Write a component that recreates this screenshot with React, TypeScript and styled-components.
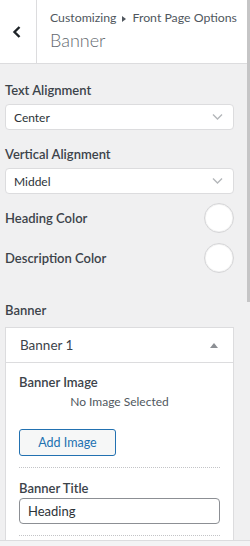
import styled, { createGlobalStyle } from "styled-components";

const GlobalStyle = createGlobalStyle`
  html, body {
    margin: 0;
    padding: 0;
    background: #f0f0f1;
  }
  body {
    font-family: Lato, "Liberation Sans", sans-serif;
    color: #1d2327;
  }
  * {
    box-sizing: border-box;
  }
`;

const Panel = styled.div`
  width: 250px;
  height: 546px;
  display: flex;
  flex-direction: column;
  background: #f0f0f1;
`;

const Main = styled.div`
  flex: 1;
  display: flex;
  min-height: 0;
`;

const Content = styled.div`
  flex: 1;
  min-width: 0;
  overflow: hidden;
`;

const ScrollTrack = styled.div`
  width: 3px;
  flex: none;
  background: #f0f0f1;
`;

const ScrollThumb = styled.div`
  height: 302px;
  background: #c5c5c6;
`;

const Header = styled.div`
  display: flex;
  height: 64px;
  background: #fff;
  border-bottom: 1px solid #dcdcde;
`;

const BackButton = styled.button`
  width: 37px;
  flex: none;
  display: flex;
  align-items: center;
  justify-content: center;
  padding: 0 2px 0 0;
  background: #fff;
  border: 0;
  border-right: 1px solid #dcdcde;
  cursor: pointer;
`;

const HeaderText = styled.div`
  display: flex;
  flex-direction: column;
  padding: 9px 0 0 13px;
`;

const Breadcrumb = styled.div`
  display: flex;
  align-items: center;
  font-size: 12.3px;
  line-height: 18px;
  color: #50575e;
  white-space: nowrap;
`;

const Arrow = styled.svg`
  margin: 1px 6px 0 6px;
`;

const Title = styled.div`
  font-size: 18px;
  font-weight: 300;
  line-height: 27px;
  color: #646970;
`;

const Body = styled.div`
  padding: 16px 13px 0 5px;
  display: flex;
  flex-direction: column;
`;

const ControlTitle = styled.div<{ $gap?: number }>`
  font-size: 13px;
  font-weight: 600;
  line-height: 20px;
  color: #3c434a;
  margin-bottom: ${(p) => p.$gap ?? 4}px;
`;

const SelectBox = styled.div`
  height: 26px;
  display: flex;
  align-items: center;
  justify-content: space-between;
  padding: 0 10px 0 8px;
  background: #fff;
  border: 1px solid #dcdcde;
  border-radius: 4px;
  font-size: 12px;
  color: #2c3338;
  margin-bottom: 14px;
`;

const ColorRow = styled.div<{ $top: number }>`
  display: flex;
  align-items: center;
  justify-content: space-between;
  margin-top: ${(p) => p.$top}px;
`;

const Swatch = styled.div`
  width: 30px;
  height: 30px;
  border-radius: 50%;
  background: #fff;
  border: 1px solid #d4d4d6;
  box-shadow: inset 0 0 0 1px #f3f3f3;
`;

const SectionTitle = styled.div`
  font-size: 13px;
  font-weight: 600;
  line-height: 20px;
  color: #3c434a;
  margin: 27px 0 7px;
`;

const Card = styled.div`
  background: #fff;
  border: 1px solid #dcdcde;
`;

const CardHead = styled.div`
  height: 35px;
  display: flex;
  align-items: center;
  justify-content: space-between;
  padding: 0 15px 0 14px;
  border-bottom: 1px solid #dcdcde;
  font-size: 13.5px;
  color: #3c434a;
`;

const CardBody = styled.div`
  padding: 9px 13px 60px;
  display: flex;
  flex-direction: column;
`;

const FieldLabel = styled.div`
  font-size: 13px;
  font-weight: 600;
  line-height: 20px;
  color: #3c434a;
`;

const Placeholder = styled.div`
  text-align: center;
  font-size: 12px;
  line-height: 20px;
  color: #50575e;
  margin-bottom: 17px;
`;

const Button = styled.button`
  align-self: flex-start;
  width: 97px;
  height: 27px;
  padding: 0;
  font-family: inherit;
  font-size: 12.5px;
  color: #2271b1;
  background: #f6f7f7;
  border: 1px solid #2271b1;
  border-radius: 3px;
`;

const Divider = styled.div<{ $top: number; $bottom: number }>`
  border-top: 1px dotted #c3c4c7;
  margin: ${(p) => p.$top}px 0 ${(p) => p.$bottom}px;
`;

const TextInput = styled.div`
  height: 26px;
  display: flex;
  align-items: center;
  padding: 0 8px;
  border: 1px solid #8c8f94;
  border-radius: 4px;
  font-size: 13px;
  color: #2c3338;
`;

const Footer = styled.div`
  height: 6px;
  flex: none;
  background: #f3f3f4;
  border-top: 1px solid #dcdcde;
`;

const Chevron = () => (
  <svg width="11" height="8" viewBox="0 0 11 8">
    <polyline points="1,1.5 5.5,6 10,1.5" fill="none" stroke="#b4b7ba" strokeWidth="1.4" />
  </svg>
);

const Select = ({ value }: { value: string }) => (
  <SelectBox>
    {value}
    <Chevron />
  </SelectBox>
);

const App = () => {
  return (
    <Panel>
      <GlobalStyle />
      <Main>
        <Content>
          <Header>
            <BackButton aria-label="Back">
              <svg width="10" height="14" viewBox="0 0 10 14">
                <polyline points="7.5,2 2.5,7 7.5,12" fill="none" stroke="#1d2327" strokeWidth="2.4" />
              </svg>
            </BackButton>
            <HeaderText>
              <Breadcrumb>
                Customizing
                <Arrow width="4" height="6" viewBox="0 0 4 6">
                  <polygon points="0,0 4,3 0,6" fill="#50575e" />
                </Arrow>
                Front Page Options
              </Breadcrumb>
              <Title>Banner</Title>
            </HeaderText>
          </Header>

          <Body>
            <ControlTitle>Text Alignment</ControlTitle>
            <Select value="Center" />
            <ControlTitle>Vertical Alignment</ControlTitle>
            <Select value="Middel" />

            <ColorRow $top={-5}>
              <ControlTitle $gap={0}>Heading Color</ControlTitle>
              <Swatch />
            </ColorRow>
            <ColorRow $top={10}>
              <ControlTitle $gap={0}>Description Color</ControlTitle>
              <Swatch />
            </ColorRow>

            <SectionTitle>Banner</SectionTitle>
            <Card>
              <CardHead>
                Banner 1
                <svg width="8" height="5" viewBox="0 0 8 5">
                  <polygon points="0,5 4,0 8,5" fill="#8c8f94" />
                </svg>
              </CardHead>
              <CardBody>
                <FieldLabel>Banner Image</FieldLabel>
                <Placeholder>No Image Selected</Placeholder>
                <Button>Add Image</Button>
                <Divider $top={11} $bottom={10} />
                <FieldLabel>Banner Title</FieldLabel>
                <TextInput>Heading</TextInput>
                <Divider $top={11} $bottom={10} />
              </CardBody>
            </Card>
          </Body>
        </Content>
        <ScrollTrack>
          <ScrollThumb />
        </ScrollTrack>
      </Main>
      <Footer />
    </Panel>
  );
};

export default App;
